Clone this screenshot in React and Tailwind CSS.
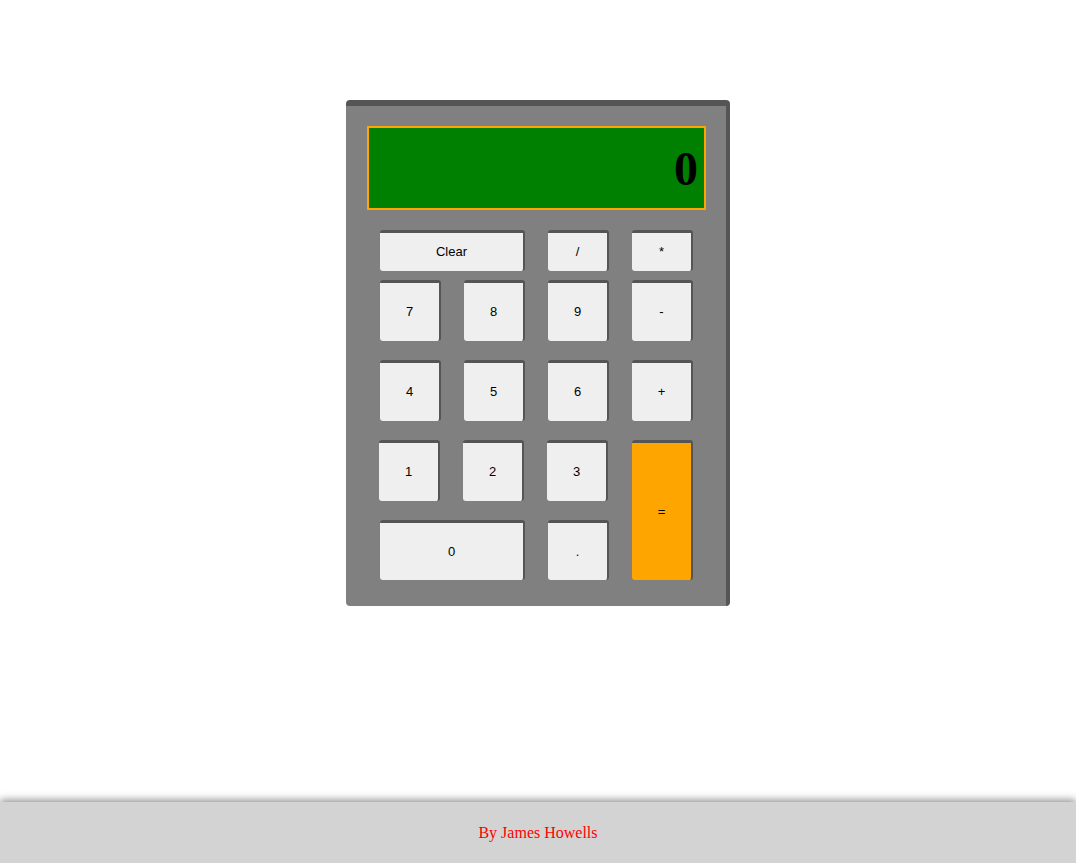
const btn =
  'flex items-center justify-center bg-[#efefef] border-t-[3px] border-r-2 border-[#555] rounded-[3px] text-[13px] text-black'

function Key({ label, className = '' }) {
  return <div className={`${btn} ${className}`}>{label}</div>
}

export default function App() {
  return (
    <div
      className="min-h-screen w-full flex flex-col bg-white"
      style={{ fontFamily: '"Liberation Sans", Arial, sans-serif' }}
    >
      <main className="flex justify-center pt-[100px]">
        <div className="w-[384px] bg-[#808080] border-t-[6px] border-r-4 border-[#555] rounded-[4px] pt-[20px] pb-[26px] pl-[21px] pr-[20px]">
          <div className="h-[84px] bg-[#008000] border-2 border-[#ffa500] flex items-center justify-end pr-[6px]">
            <span
              className="text-[48px] font-bold leading-none text-black pt-[2px]"
              style={{ fontFamily: '"Liberation Serif", "Times New Roman", serif' }}
            >
              0
            </span>
          </div>

          <div className="mt-[20px] ml-[13px] grid grid-cols-[61px_61px_61px_61px] gap-x-[23px] h-[41px]">
            <Key label="Clear" className="col-span-2" />
            <Key label="/" />
            <Key label="*" />
          </div>

          <div className="mt-[9px] ml-[13px] grid grid-cols-[61px_61px_61px_61px] grid-rows-[61px_61px_61px_60px] gap-x-[23px] gap-y-[19px]">
            <Key label="7" />
            <Key label="8" />
            <Key label="9" />
            <Key label="-" />
            <Key label="4" />
            <Key label="5" />
            <Key label="6" />
            <Key label="+" />
            <Key label="1" className="-translate-x-px" />
            <Key label="2" className="-translate-x-px" />
            <Key label="3" className="-translate-x-px" />
            <Key label="=" className="row-span-2 bg-[#ffa500]" />
            <Key label="0" className="col-span-2" />
            <Key label="." />
          </div>
        </div>
      </main>

      <footer className="mt-auto h-[61px] bg-[#d3d3d3] shadow-[0_-2px_8px_rgba(0,0,0,0.45)] flex items-center justify-center">
        <span
          className="text-[16px] text-[#ff0000]"
          style={{ fontFamily: '"Liberation Serif", "Times New Roman", serif' }}
        >
          By James Howells
        </span>
      </footer>
    </div>
  )
}
